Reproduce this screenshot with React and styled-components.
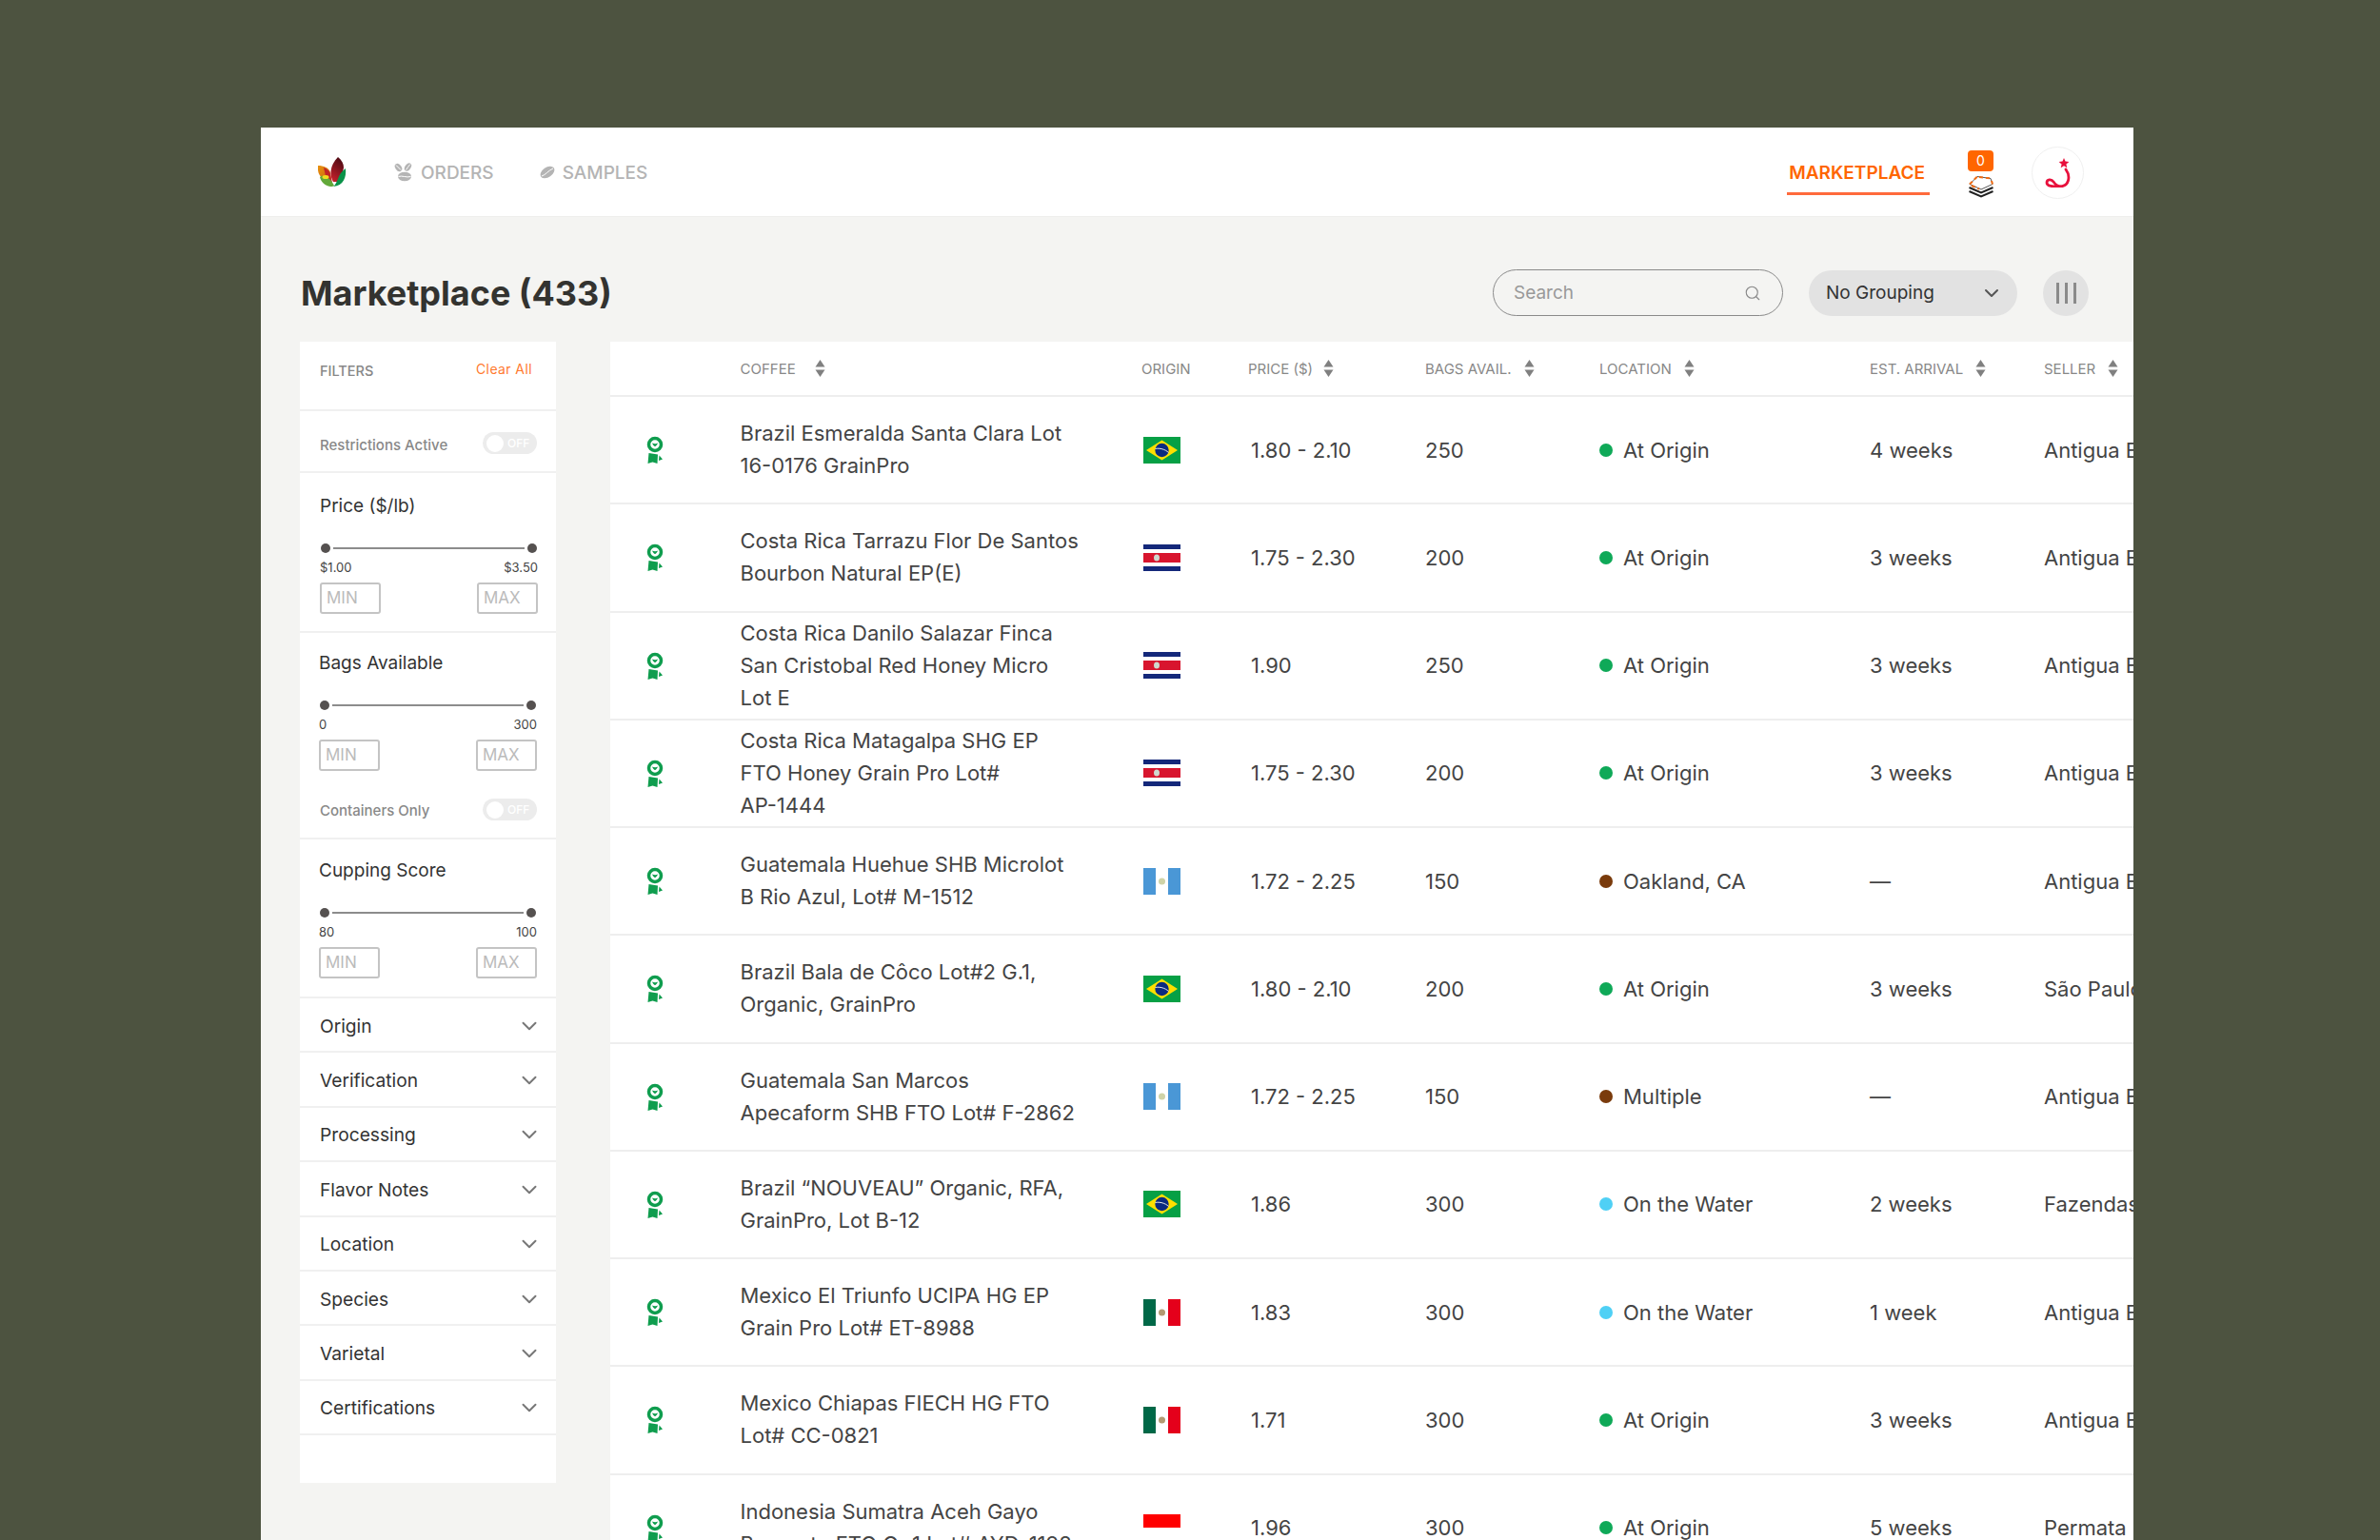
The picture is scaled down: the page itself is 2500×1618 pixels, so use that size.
import React from 'react';
import styled, { createGlobalStyle } from 'styled-components';
import { ChevronDown, Search } from 'lucide-react';

const GlobalStyle = createGlobalStyle`
    html, body {
        margin: 0;
        padding: 0;
        background: #4d5340;
        font-family: Inter, "Liberation Sans", sans-serif;
    }
    #root {
        height: 1618px;
        overflow: hidden;
    }
`;

const COLUMNS = '136.5px 421.5px 112px 186px 183px 284px 183px 200px';

const Window = styled.div`
    margin: 134px 0 0 274px;
    width: 1967px;
    height: 1484px;
    background: #f4f4f2;
    overflow: hidden;
`;

/* Top bar */
const TopBar = styled.header`
    display: flex;
    align-items: center;
    height: 94px;
    box-sizing: border-box;
    background: #fff;
    border-bottom: 1px solid #eeeeec;
    padding: 0 52px 0 60px;
`;

const LogoMark = styled.svg`
    width: 30px;
    height: 31px;
    margin-right: 50px;
`;

const NavLink = styled.a`
    display: flex;
    align-items: center;
    gap: 8px;
    margin-right: 48px;
    padding-top: 1px;
    color: #b4b4b4;
    font-size: 19px;
    font-weight: 500;
`;

const Spacer = styled.div`
    flex: 1;
`;

const ActiveLink = styled.a`
    display: flex;
    align-items: center;
    height: 46px;
    box-sizing: border-box;
    padding: 3px 5px 0 2px;
    margin: 2px 40px 0 0;
    border-bottom: 3px solid #ff6a3c;
    color: #ff6600;
    font-size: 19px;
    font-weight: 600;
`;

const CartBox = styled.div`
    display: flex;
    flex-direction: column;
    align-items: center;
    width: 27px;
    gap: 4px;
    margin: 4px 40px 0 0;
`;

const CartBadge = styled.span`
    width: 27px;
    height: 22px;
    border-radius: 4px;
    background: #ff6600;
    color: #fff;
    font-size: 14px;
    line-height: 22px;
    text-align: center;
`;

const Avatar = styled.div`
    display: flex;
    align-items: center;
    justify-content: center;
    width: 55px;
    height: 55px;
    margin-top: 1px;
    border-radius: 50%;
    border: 1px solid #f0f0f0;
    box-sizing: border-box;
    background: #fff;
`;

/* Title row */
const TitleRow = styled.div`
    display: flex;
    align-items: center;
    height: 131px;
    box-sizing: border-box;
    padding: 55px 47px 27px 42px;
    gap: 27px;
`;

const PageTitle = styled.h1`
    flex: 1;
    margin: 0;
    color: #333330;
    font-size: 36px;
    font-weight: 700;
`;

const SearchBox = styled.div`
    display: flex;
    align-items: center;
    justify-content: space-between;
    width: 305px;
    height: 49px;
    box-sizing: border-box;
    border: 1.5px solid #8a8a8a;
    border-radius: 25px;
    padding: 0 22px 0 21px;
    color: #999;
    font-size: 19px;
`;

const GroupSelect = styled.div`
    display: flex;
    align-items: center;
    justify-content: space-between;
    width: 219px;
    height: 48px;
    box-sizing: border-box;
    border-radius: 24px;
    background: #e2e2e2;
    padding: 0 15px 0 18px;
    color: #333;
    font-size: 19px;
`;

const ColumnsButton = styled.div`
    display: flex;
    align-items: center;
    justify-content: center;
    gap: 6px;
    width: 48px;
    height: 48px;
    border-radius: 50%;
    background: #e2e2e2;
`;

const ColumnBar = styled.span`
    width: 3px;
    height: 22px;
    background: #8a8a8a;
`;

/* Body */
const Content = styled.div`
    display: flex;
    align-items: flex-start;
    padding-left: 41px;
    gap: 57px;
`;

/* Filters */
const Sidebar = styled.aside`
    flex: none;
    width: 269px;
    height: 1199px;
    background: #fff;
`;

const FilterHead = styled.div`
    display: flex;
    justify-content: space-between;
    height: 73px;
    box-sizing: border-box;
    padding: 22px 25px 0 21px;
    border-bottom: 2px solid #f0f0f0;
`;

const FilterHeadLabel = styled.span`
    color: #888;
    font-size: 14.5px;
    font-weight: 500;
    line-height: 18px;
`;

const ClearAll = styled.a`
    color: #ff7a2f;
    font-size: 14px;
    line-height: 14px;
    letter-spacing: 0.4px;
`;

const SwitchRow = styled.div`
    display: flex;
    align-items: center;
    justify-content: space-between;
    height: ${p => p.$height}px;
    box-sizing: border-box;
    padding: ${p => p.$top}px 20px ${p => p.$bottom}px 21px;
    border-bottom: ${p => (p.$ruled ? '2px solid #f0f0f0' : 'none')};
`;

const SwitchLabel = styled.span`
    color: #888;
    font-size: 15px;
    font-weight: 500;
    padding-top: ${p => p.$nudge}px;
`;

const Toggle = styled.span`
    display: flex;
    align-items: center;
    width: 57px;
    height: 23px;
    box-sizing: border-box;
    padding: 0 2px 0 4px;
    gap: 4px;
    border-radius: 12px;
    background: #ececec;
    color: #fff;
    font-size: 12px;
    font-weight: 500;
`;

const ToggleKnob = styled.i`
    width: 18px;
    height: 18px;
    border-radius: 50%;
    background: #fff;
`;

const RangeGroup = styled.section`
    box-sizing: border-box;
    height: ${p => p.$height}px;
    padding: ${p => p.$top}px ${p => 40 - p.$left}px 0 ${p => p.$left}px;
    border-bottom: ${p => (p.$ruled ? '2px solid #f0f0f0' : 'none')};
`;

const GroupTitle = styled.div`
    color: #333;
    font-size: 19px;
    line-height: 24px;
`;

const Track = styled.div`
    display: flex;
    align-items: center;
    margin-top: 26px;
    height: 12px;
    padding: 0 1px;
`;

const Thumb = styled.span`
    flex: none;
    width: 10px;
    height: 10px;
    border-radius: 50%;
    background: #555150;
`;

const TrackLine = styled.span`
    flex: 1;
    height: 2px;
    margin: 0 3px;
    background: #8c8c8c;
`;

const RangeLabels = styled.div`
    display: flex;
    justify-content: space-between;
    margin-top: 5px;
    color: #444;
    font-size: 13px;
    line-height: 18px;
`;

const InputPair = styled.div`
    display: flex;
    justify-content: space-between;
    margin-top: 7px;
`;

const NumberInput = styled.div`
    width: 64px;
    height: 33px;
    box-sizing: border-box;
    border: 2px solid #c4c4c4;
    border-radius: 3px;
    padding-left: 5px;
    color: #bbb;
    font-size: 17px;
    line-height: 29px;
`;

const AccordionRow = styled.div`
    display: flex;
    align-items: center;
    justify-content: space-between;
    height: 57.4px;
    box-sizing: border-box;
    padding: 2px 15px 0 21px;
    border-bottom: 2px solid #f0f0f0;
    color: #333;
    font-size: 19.2px;
`;

/* Table */
const Table = styled.div`
    flex: none;
    width: 1706px;
    background: #fff;
`;

const HeadRow = styled.div`
    display: grid;
    grid-template-columns: ${COLUMNS};
    align-items: center;
    height: 58px;
    box-sizing: border-box;
    border-bottom: 2px solid #eee;
`;

const HeadCell = styled.div`
    display: flex;
    align-items: center;
    gap: ${p => p.$gap || 13}px;
    color: #888;
    font-size: 15px;
    font-weight: 400;
`;

const Row = styled.div`
    display: grid;
    grid-template-columns: ${COLUMNS};
    align-items: center;
    height: 113.25px;
    box-sizing: border-box;
    border-bottom: 2px solid #eee;
    color: #444;
    font-size: 22px;
`;

const AwardCell = styled.div`
    display: flex;
    padding-left: 38px;
    padding-top: 1px;
`;

const CoffeeName = styled.div`
    width: 356px;
    padding-bottom: 1px;
    line-height: 34px;
`;

const NoBreak = styled.span`
    white-space: nowrap;
`;

const PriceCell = styled.div`
    padding-left: 3px;
`;

const LocationCell = styled.div`
    display: flex;
    align-items: center;
    gap: 11px;
`;

const Dot = styled.span`
    width: 14px;
    height: 14px;
    border-radius: 50%;
    background: ${p => p.$color};
`;

const SellerCell = styled.div`
    white-space: nowrap;
`;

const FlagIcon = styled.svg`
    display: block;
    width: 39px;
    height: 28px;
    margin-left: 2px;
`;

/* Drawings */
const Logo = () => (
    <LogoMark viewBox="0 0 30 31">
        <defs>
            <linearGradient id="logoLeft" x1="0" y1="0" x2="1" y2="1">
                <stop offset="0" stopColor="#e8920f" />
                <stop offset="1" stopColor="#c8600f" />
            </linearGradient>
            <linearGradient id="logoMid" x1="0.7" y1="0" x2="0.3" y2="1">
                <stop offset="0" stopColor="#4a0a14" />
                <stop offset="1" stopColor="#c4202a" />
            </linearGradient>
        </defs>
        <path d="M0 9C6 9 11 11 13 16L14 26C8 25 1 22 0 14Z" fill="url(#logoLeft)" />
        <path d="M21 0C25 3 27 7 27 11L24 26L16 26C12 20 12 9 21 0Z" fill="url(#logoMid)" />
        <path d="M6 11C9 12 12 14 13 18L15 27L9 24Z" fill="#c02426" />
        <path d="M29 12C30 21 27 30 16 31C21 28 20 18 29 12Z" fill="#0a9249" />
        <path d="M2 21C5 18 12 20 17 30C16 31 14 31 13 31C7 30 3 26 2 21Z" fill="#63a93a" />
        <ellipse cx="8" cy="21" rx="3.5" ry="2" fill="#f0dc1e" />
    </LogoMark>
);

const BeansIcon = () => (
    <svg width="20" height="20" viewBox="0 0 20 20" fill="#b4b4b4">
        <ellipse cx="4.5" cy="5" rx="3.2" ry="4.6" transform="rotate(-35 4.5 5)" />
        <ellipse cx="14.5" cy="4.5" rx="3" ry="4.6" transform="rotate(35 14.5 4.5)" />
        <ellipse cx="11" cy="14.5" rx="7" ry="4.8" />
        <path d="M4.5 14.5C8 13 13 16 17.5 14.5M2 2.500C4 4 5 6 7 7.500M17 1.500C15 3.500 14 5.500 12.500 7.500" stroke="#fff" fill="none" />
    </svg>
);

const BeanIcon = () => (
    <svg width="16" height="16" viewBox="0 0 16 16" fill="#b4b4b4">
        <ellipse cx="8" cy="8" rx="8.2" ry="5.2" transform="rotate(-35 8 8)" />
        <path d="M2 12C6 11 9 6 14 4" stroke="#fff" fill="none" />
    </svg>
);

const StackIcon = () => (
    <svg width="28" height="24" viewBox="0 0 28 24">
        <path d="M1.500 17l12.500 5.500L26.500 17" stroke="#222" strokeWidth="2" fill="none" />
        <path d="M1.500 13l12.500 5.500L26.500 13" stroke="#222" strokeWidth="2" fill="none" />
        <path d="M2 9.500L10 1.500L24 3.500L26 9.500L14 15Z" fill="#fff" stroke="#555" strokeWidth="1" />
        <path d="M2 9.500L10 1.500M12 2L24 3.500M25 6L26 9.500M4 11L12 14.500" stroke="#f26a10" strokeWidth="2" strokeDasharray="4 3" fill="none" />
    </svg>
);

const UserMark = () => (
    <svg width="30" height="32" viewBox="0 0 30 32">
        <path d="M21 1l1.500 3.600 3.900.3-3 2.500.9 3.800L21 9.200l-3.300 2 .9-3.800-3-2.500 3.900-.3Z" fill="#e8103c" />
        <path d="M23 13C28 20 27 31 16 31C10 31 3 31 3 27C3 23 8 23 10 26C12 29 15 31 18 31" stroke="#e8103c" strokeWidth="2.800" fill="none" strokeLinecap="round" />
    </svg>
);

const SortArrows = () => (
    <svg width="11" height="18" viewBox="0 0 11 18" fill="#808080">
        <path d="M5.500 0L10.500 7.500H.5Z" />
        <path d="M5.500 18L10.500 10.500H.5Z" />
    </svg>
);

const AwardIcon = () => (
    <svg width="18" height="30" viewBox="0 0 18 30" fill="#0f9d4e">
        <circle cx="9" cy="9" r="6.500" fill="none" stroke="#0f9d4e" strokeWidth="3.500" />
        <path d="M6 7.500C7 9.500 8 11 9 11C10 11 11.500 9 12 7.500C10.500 8.500 8 8.500 6 7.500Z" />
        <path d="M2.500 18L12 19.500L11.500 29L6.500 27.500L1.500 29Z" />
        <path d="M13.500 20.500L17 24.500L13 26Z" />
    </svg>
);

const Flag = ({ country }) => {
    if (country === 'br') {
        return (
            <FlagIcon viewBox="0 0 39 28">
                <rect width="39" height="28" fill="#06a045" />
                <path d="M19.500 3.500L36 14L19.500 24.500L3 14Z" fill="#fedf00" />
                <circle cx="19.500" cy="14" r="7.200" fill="#0b2a80" />
                <path d="M12.500 12.500C17 11.500 23 13 26.500 16.500" stroke="#e8e8e8" fill="none" />
            </FlagIcon>
        );
    }
    if (country === 'cr') {
        return (
            <FlagIcon viewBox="0 0 39 28">
                <rect width="39" height="28" fill="#fff" />
                <rect width="39" height="5" fill="#14287a" />
                <rect y="9" width="39" height="10" fill="#d8152e" />
                <rect y="23" width="39" height="5" fill="#14287a" />
                <ellipse cx="14" cy="14" rx="3" ry="3.500" fill="#cfd8cf" />
            </FlagIcon>
        );
    }
    if (country === 'gt') {
        return (
            <FlagIcon viewBox="0 0 39 28">
                <rect width="39" height="28" fill="#fff" />
                <rect width="13" height="28" fill="#4a97d6" />
                <rect x="26" width="13" height="28" fill="#4a97d6" />
                <circle cx="19.500" cy="14" r="3.500" fill="#cfd3a8" />
            </FlagIcon>
        );
    }
    if (country === 'mx') {
        return (
            <FlagIcon viewBox="0 0 39 28">
                <rect width="39" height="28" fill="#fff" />
                <rect width="13" height="28" fill="#006847" />
                <rect x="26" width="13" height="28" fill="#e4001b" />
                <circle cx="19.500" cy="14" r="3.500" fill="#b39a72" />
            </FlagIcon>
        );
    }
    return (
        <FlagIcon viewBox="0 0 39 28">
            <rect width="39" height="28" fill="#fff" />
            <rect width="39" height="14" fill="#ff0000" />
        </FlagIcon>
    );
};

const GREEN = '#0fa958';
const BROWN = '#7a3b0c';
const BLUE = '#4fd0f5';

const coffees = [
    { name: 'Brazil Esmeralda Santa Clara Lot 16-0176 GrainPro', flag: 'br', price: '1.80 - 2.10', bags: '250', dot: GREEN, location: 'At Origin', arrival: '4 weeks', seller: 'Antigua Exports' },
    { name: 'Costa Rica Tarrazu Flor De Santos Bourbon Natural EP(E)', flag: 'cr', price: '1.75 - 2.30', bags: '200', dot: GREEN, location: 'At Origin', arrival: '3 weeks', seller: 'Antigua Exports' },
    { name: 'Costa Rica Danilo Salazar Finca San Cristobal Red Honey Micro Lot E', flag: 'cr', price: '1.90', bags: '250', dot: GREEN, location: 'At Origin', arrival: '3 weeks', seller: 'Antigua Exports' },
    { name: 'Costa Rica Matagalpa SHG EP FTO Honey Grain Pro Lot# AP-1444', flag: 'cr', price: '1.75 - 2.30', bags: '200', dot: GREEN, location: 'At Origin', arrival: '3 weeks', seller: 'Antigua Exports' },
    { name: 'Guatemala Huehue SHB Microlot B Rio Azul, Lot# M-1512', flag: 'gt', price: '1.72 - 2.25', bags: '150', dot: BROWN, location: 'Oakland, CA', arrival: '—', seller: 'Antigua Exports' },
    { name: 'Brazil Bala de Côco Lot#2 G.1, Organic, GrainPro', flag: 'br', price: '1.80 - 2.10', bags: '200', dot: GREEN, location: 'At Origin', arrival: '3 weeks', seller: 'São Paulo' },
    { name: 'Guatemala San Marcos Apecaform SHB FTO Lot# F-2862', flag: 'gt', price: '1.72 - 2.25', bags: '150', dot: BROWN, location: 'Multiple', arrival: '—', seller: 'Antigua Exports' },
    { name: 'Brazil “NOUVEAU” Organic, RFA, GrainPro, Lot B-12', flag: 'br', price: '1.86', bags: '300', dot: BLUE, location: 'On the Water', arrival: '2 weeks', seller: 'Fazendas' },
    { name: 'Mexico El Triunfo UCIPA HG EP Grain Pro Lot# ET-8988', flag: 'mx', price: '1.83', bags: '300', dot: BLUE, location: 'On the Water', arrival: '1 week', seller: 'Antigua Exports' },
    { name: 'Mexico Chiapas FIECH HG FTO Lot# CC-0821', flag: 'mx', price: '1.71', bags: '300', dot: GREEN, location: 'At Origin', arrival: '3 weeks', seller: 'Antigua Exports' },
    { name: 'Indonesia Sumatra Aceh Gayo Bereneto FTO Gr 1 Lot# AYD-1198', flag: 'id', price: '1.96', bags: '300', dot: GREEN, location: 'At Origin', arrival: '5 weeks', seller: 'Permata' },
];

const accordionFilters = ['Origin', 'Verification', 'Processing', 'Flavor Notes', 'Location', 'Species', 'Varietal', 'Certifications'];

const headers = [
    { label: '' },
    { label: 'COFFEE', sort: true, gap: 20 },
    { label: 'ORIGIN' },
    { label: 'PRICE ($)', sort: true, gap: 11 },
    { label: 'BAGS AVAIL.', sort: true },
    { label: 'LOCATION', sort: true },
    { label: 'EST. ARRIVAL', sort: true },
    { label: 'SELLER', sort: true },
];

// lot codes keep their hyphen on one line
const renderName = name => name.split(' ').map((word, index) => (
    <React.Fragment key={index}>
        {index > 0 && ' '}
        {word.includes('-') ? <NoBreak>{word}</NoBreak> : word}
    </React.Fragment>
));

const Range = ({ low, high }) => (
    <>
        <Track>
            <Thumb />
            <TrackLine />
            <Thumb />
        </Track>
        <RangeLabels>
            <span>{low}</span>
            <span>{high}</span>
        </RangeLabels>
        <InputPair>
            <NumberInput>MIN</NumberInput>
            <NumberInput>MAX</NumberInput>
        </InputPair>
    </>
);

const Switch = () => (
    <Toggle>
        <ToggleKnob />
        OFF
    </Toggle>
);

export default function App() {
    return (
        <>
            <GlobalStyle />
            <Window>
                <TopBar>
                    <Logo />
                    <NavLink><BeansIcon />ORDERS</NavLink>
                    <NavLink><BeanIcon />SAMPLES</NavLink>
                    <Spacer />
                    <ActiveLink>MARKETPLACE</ActiveLink>
                    <CartBox>
                        <CartBadge>0</CartBadge>
                        <StackIcon />
                    </CartBox>
                    <Avatar><UserMark /></Avatar>
                </TopBar>
                <TitleRow>
                    <PageTitle>Marketplace (433)</PageTitle>
                    <SearchBox>
                        Search
                        <Search size={18} color="#888" strokeWidth={1.5} />
                    </SearchBox>
                    <GroupSelect>
                        No Grouping
                        <ChevronDown size={24} color="#555" strokeWidth={2} />
                    </GroupSelect>
                    <ColumnsButton>
                        <ColumnBar />
                        <ColumnBar />
                        <ColumnBar />
                    </ColumnsButton>
                </TitleRow>
                <Content>
                    <Sidebar>
                        <FilterHead>
                            <FilterHeadLabel>FILTERS</FilterHeadLabel>
                            <ClearAll>Clear All</ClearAll>
                        </FilterHead>
                        <SwitchRow $height={65} $top={4} $bottom={0} $ruled>
                            <SwitchLabel $nudge={4}>Restrictions Active</SwitchLabel>
                            <Switch />
                        </SwitchRow>
                        <RangeGroup $height={168} $top={23} $left={21} $ruled>
                            <GroupTitle>Price ($/lb)</GroupTitle>
                            <Range low="$1.00" high="$3.50" />
                        </RangeGroup>
                        <RangeGroup $height={158} $top={20} $left={20}>
                            <GroupTitle>Bags Available</GroupTitle>
                            <Range low="0" high="300" />
                        </RangeGroup>
                        <SwitchRow $height={59} $top={0} $bottom={2} $ruled>
                            <SwitchLabel $nudge={2}>Containers Only</SwitchLabel>
                            <Switch />
                        </SwitchRow>
                        <RangeGroup $height={167} $top={21} $left={20} $ruled>
                            <GroupTitle>Cupping Score</GroupTitle>
                            <Range low="80" high="100" />
                        </RangeGroup>
                        {accordionFilters.map(name => (
                            <AccordionRow key={name}>
                                {name}
                                <ChevronDown size={26} color="#777" strokeWidth={1.8} />
                            </AccordionRow>
                        ))}
                    </Sidebar>
                    <Table>
                        <HeadRow>
                            {headers.map((header, index) => (
                                <HeadCell key={index} $gap={header.gap}>
                                    {header.label}
                                    {header.sort && <SortArrows />}
                                </HeadCell>
                            ))}
                        </HeadRow>
                        {coffees.map(coffee => (
                            <Row key={coffee.name}>
                                <AwardCell><AwardIcon /></AwardCell>
                                <CoffeeName>{renderName(coffee.name)}</CoffeeName>
                                <div><Flag country={coffee.flag} /></div>
                                <PriceCell>{coffee.price}</PriceCell>
                                <div>{coffee.bags}</div>
                                <LocationCell>
                                    <Dot $color={coffee.dot} />
                                    {coffee.location}
                                </LocationCell>
                                <div>{coffee.arrival}</div>
                                <SellerCell>{coffee.seller}</SellerCell>
                            </Row>
                        ))}
                    </Table>
                </Content>
            </Window>
        </>
    );
}
